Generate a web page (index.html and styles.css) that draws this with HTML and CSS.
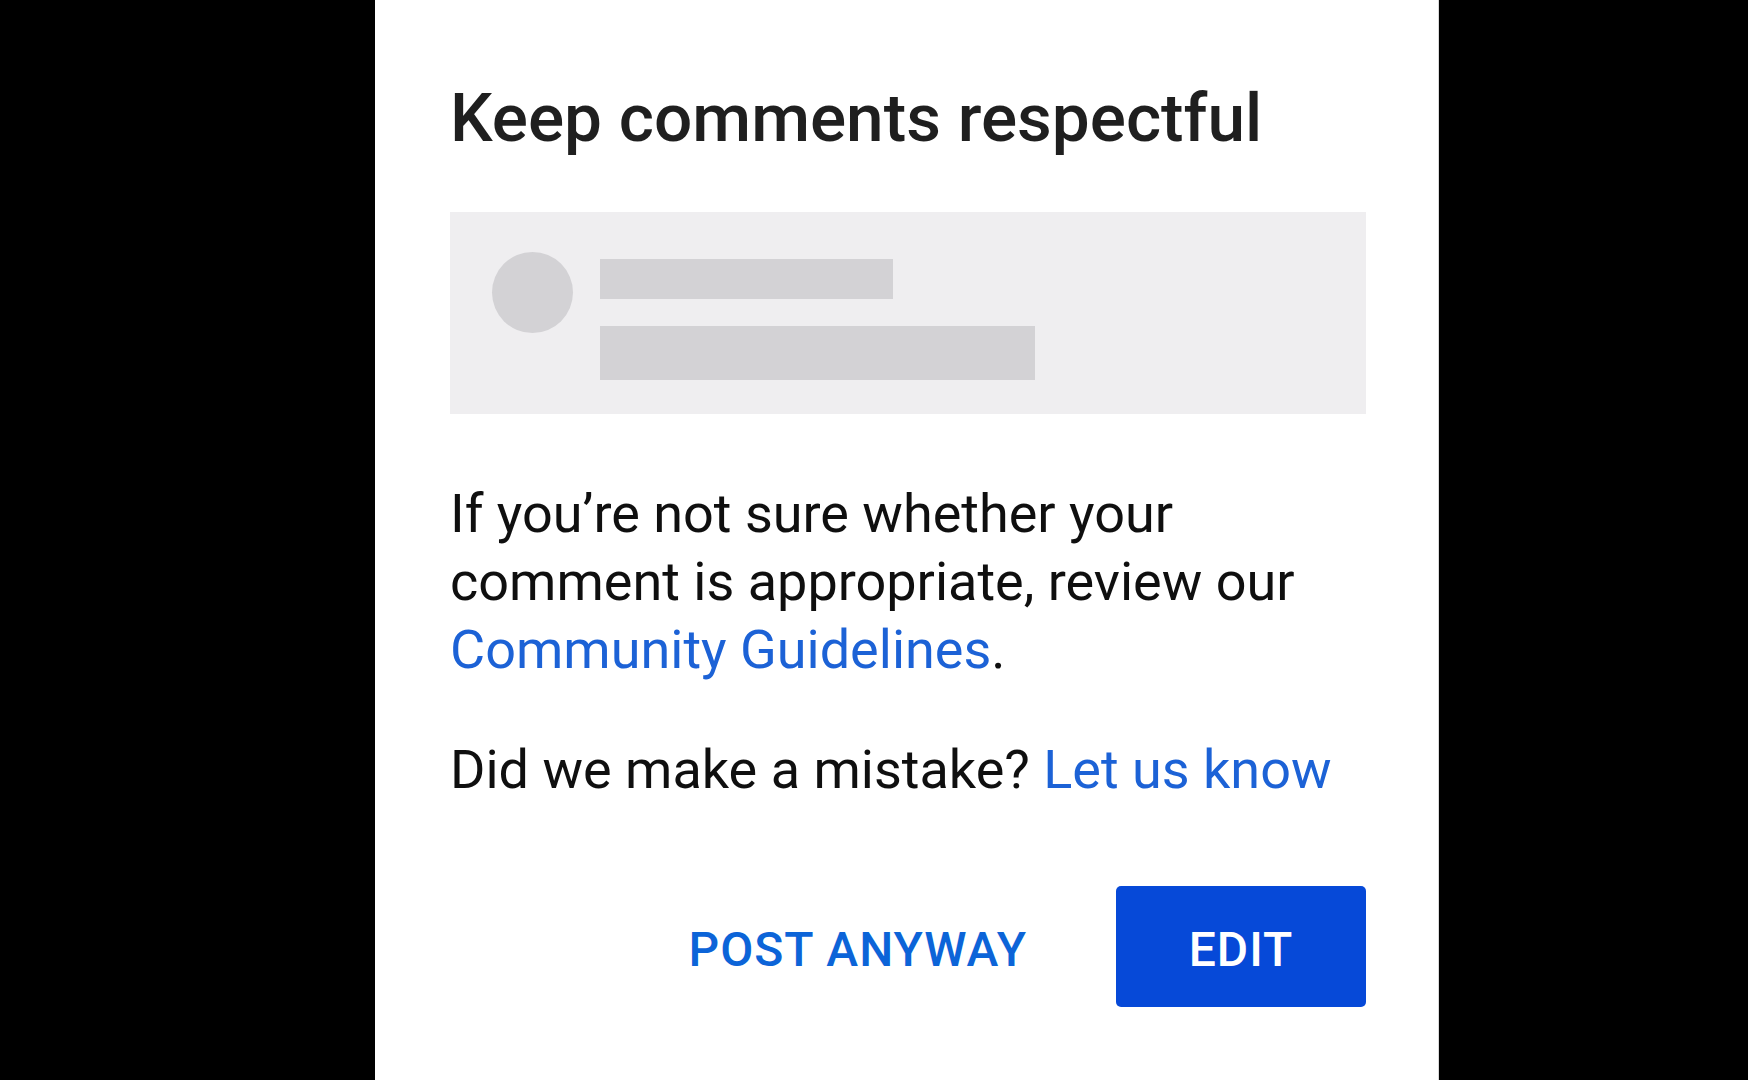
FILE: index.html
```html
<!DOCTYPE html>
<html>
<head>
    <title>Keep comments respectful</title>
    <link rel="stylesheet" href="styles.css">
</head>
<body>

    <div class="dialog">
        <h2 class="dialog-title">Keep comments respectful</h2>

        <div class="comment-preview">
            <div class="avatar"></div>
            <div class="lines">
                <div class="line short"></div>
                <div class="line long"></div>
            </div>
        </div>

        <p class="dialog-text">If you’re not sure whether your comment is appropriate, review our <a href="#">Community Guidelines</a>.</p>
        <p class="dialog-text mistake">Did we make a mistake? <a href="#">Let us know</a></p>

        <div class="actions">
            <button class="text-btn">POST ANYWAY</button>
            <button class="edit-btn">EDIT</button>
        </div>
    </div>

</body>
</html>
```

FILE: styles.css
```css
body {
    margin: 0;
    background-color: #000;
    font-family: Roboto, "Liberation Sans", sans-serif;
    padding-left: 375px;
    height: 1080px;
    overflow: hidden;
}
.dialog {
    box-sizing: border-box;
    width: 1064px;
    height: 1080px;
    background-color: #fff;
    padding: 78px 72px 0 75px;
    border-right: 1px solid #d8d8d8;
}
.dialog-title {
    margin: 0;
    font-size: 67.5px;
    line-height: 80px;
    font-weight: 500;
    color: #1f1f1f;
}
.comment-preview {
    display: flex;
    gap: 27px;
    height: 202px;
    box-sizing: border-box;
    margin-top: 54px;
    padding: 40px 0 0 42px;
    background-color: #efeef0;
}
.avatar {
    width: 81px;
    height: 81px;
    border-radius: 50%;
    background-color: #d3d2d5;
}
.lines {
    margin-top: 7px;
}
.line {
    background-color: #d3d2d5;
}
.line.short {
    width: 293px;
    height: 40px;
}
.line.long {
    width: 435px;
    height: 54px;
    margin-top: 27px;
}
.dialog-text {
    margin: 66px 0 0;
    font-size: 54px;
    line-height: 68px;
    color: #0f0f0f;
}
.dialog-text.mistake {
    margin-top: 52px;
}
.dialog-text a {
    color: #1c62d6;
    text-decoration: none;
}
.actions {
    display: flex;
    justify-content: flex-end;
    align-items: center;
    gap: 89px;
    margin-top: 82px;
}
.text-btn, .edit-btn {
    font-family: Roboto, "Liberation Sans", sans-serif;
    font-size: 48px;
    font-weight: 500;
    letter-spacing: 1px;
    border: none;
    cursor: pointer;
}
.text-btn {
    background: none;
    color: #0c64d8;
    padding: 6px 0 0;
}
.edit-btn {
    width: 250px;
    height: 121px;
    padding: 6px 0 0;
    border-radius: 5px;
    background-color: #0649d8;
    color: #fff;
}
```
